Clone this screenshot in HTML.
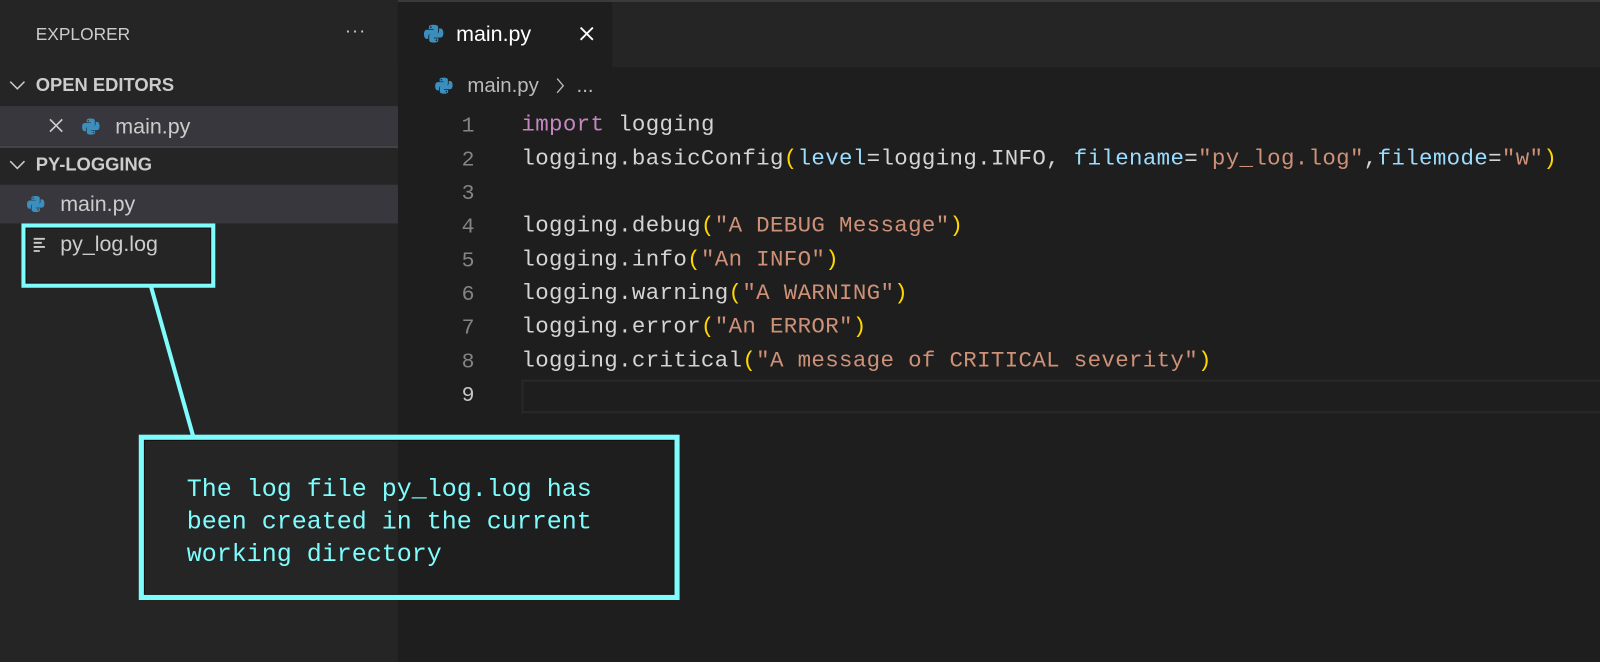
<!DOCTYPE html>
<html><head><meta charset="utf-8"><style>
*{margin:0;padding:0;box-sizing:border-box}
html,body{width:1600px;height:662px;overflow:hidden;background:#1e1e1e}
#wrap{width:1568px;height:649px;background:#1e1e1e;position:relative;overflow:hidden;font-family:"Liberation Sans",sans-serif;color:#ccc;transform:scale(1.0204);transform-origin:0 0}
.abs{position:absolute}
#side{left:0;top:0;width:390px;height:662px;background:#252526}
.ui{font-size:19px;color:#ccc;white-space:nowrap}
.mono{font-family:"Liberation Mono",monospace;font-size:22px;white-space:pre;letter-spacing:0.33px}
.k{color:#c586c0}.s{color:#ce9178}.p{color:#9cdcfe}.b{color:#ffd700}
.ln{color:#858585;width:40px;text-align:right;font-family:"Liberation Mono",monospace;font-size:21px}
</style></head><body><div id="wrap">
<div class="abs" style="left:0;top:0;width:1600px;height:2px;background:#3a3a3a"></div>
<div id="side" class="abs"></div>
<div class="abs" style="left:390px;top:2px;width:1210px;height:64px;background:#252526"></div>
<div class="abs" style="left:390px;top:2px;width:210px;height:64px;background:#1e1e1e"></div>

<svg width="0" height="0" style="position:absolute"><defs>
<g id="py"><path d="M7.8 1C4 1 4.3 2.6 4.3 2.6v1.7h3.6v.6H2.8S.4 4.6.4 8.4s2.1 3.7 2.1 3.7h1.3V10.3s-.1-2.1 2.1-2.1h3.6s2-.1 2-2V2.8S11.8 1 7.8 1zM5.8 2.2a.65.65 0 1 1 0 1.3.65.65 0 0 1 0-1.3z" fill="#3b8fbf"/>
<path d="M8.2 15c3.8 0 3.5-1.6 3.5-1.6v-1.7H8.1v-.6h5.1s2.4.3 2.4-3.5-2.1-3.7-2.1-3.7h-1.3v1.8s.1 2.1-2.1 2.1H6.5s-2 0-2 2v3.4S4.2 15 8.2 15zm2-1.2a.65.65 0 1 1 0-1.3.65.65 0 0 1 0 1.3z" fill="#3b8fbf"/></g>
</defs></svg>

<div class="abs ui" style="left:35px;top:24px;font-size:17px">EXPLORER</div>
<div class="abs" style="left:338px;top:20px;font-size:18px;color:#ccc;letter-spacing:1px">···</div>

<svg class="abs" style="left:8px;top:77px" width="18" height="14"><path d="M2 3l7 7 7-7" stroke="#ccc" stroke-width="1.5" fill="none"/></svg>
<div class="abs ui" style="left:35px;top:73px;font-weight:bold;font-size:18px">OPEN EDITORS</div>
<div class="abs" style="left:0;top:104px;width:390px;height:39px;background:#37373d"></div>
<div class="abs" style="left:0;top:143px;width:390px;height:2px;background:#444"></div>
<svg class="abs" style="left:47px;top:115px" width="16" height="16"><path d="M2 2l12 12M14 2L2 14" stroke="#ccc" stroke-width="1.6"/></svg>
<svg class="abs" style="left:80px;top:115px" width="18" height="18" viewBox="0 0 16 16"><use href="#py"/></svg>
<div class="abs ui" style="left:113px;top:113px;font-size:21px">main.py</div>

<svg class="abs" style="left:8px;top:155px" width="18" height="14"><path d="M2 3l7 7 7-7" stroke="#ccc" stroke-width="1.5" fill="none"/></svg>
<div class="abs ui" style="left:35px;top:151px;font-weight:bold;font-size:18px">PY-LOGGING</div>
<div class="abs" style="left:0;top:181px;width:390px;height:38px;background:#37373d"></div>
<svg class="abs" style="left:26px;top:191px" width="18" height="18" viewBox="0 0 16 16"><use href="#py"/></svg>
<div class="abs ui" style="left:59px;top:189px;font-size:21px">main.py</div>
<svg class="abs" style="left:32px;top:232px" width="14" height="16"><path d="M1 2h11M1 6h8M1 10h11M1 14h6" stroke="#ccc" stroke-width="1.8"/></svg>
<div class="abs ui" style="left:59px;top:228px;font-size:21px">py_log.log</div>

<svg class="abs" style="left:415px;top:23px" width="20" height="20" viewBox="0 0 16 16"><use href="#py"/></svg>
<div class="abs ui" style="left:447px;top:22px;font-size:21px;color:#fff">main.py</div>
<svg class="abs" style="left:567px;top:25px" width="16" height="16"><path d="M2 2l12 12M14 2L2 14" stroke="#fff" stroke-width="1.8"/></svg>

<svg class="abs" style="left:426px;top:75px" width="18" height="18" viewBox="0 0 16 16"><use href="#py"/></svg>
<div class="abs ui" style="left:458px;top:73px;font-size:20px;color:#bbb">main.py</div>
<svg class="abs" style="left:544px;top:75px" width="10" height="18"><path d="M2 2l6 7-6 7" stroke="#bbb" stroke-width="1.3" fill="none"/></svg>
<div class="abs ui" style="left:565px;top:73px;font-size:20px;color:#bbb">...</div>

<div class="abs" style="left:511px;top:372px;width:1089px;height:33px;border:2px solid #282828;border-right:none"></div>

<div class="abs ln" style="left:425px;top:108px;line-height:33px;width:40px">1<br>2<br>3<br>4<br>5<br>6<br>7<br>8<br><span style="color:#c6c6c6">9</span></div>
<div class="abs mono" style="left:511px;top:106px;line-height:33px;color:#d4d4d4"><span class="k">import</span> logging
logging.basicConfig<span class="b">(</span><span class="p">level</span>=logging.INFO, <span class="p">filename</span>=<span class="s">"py_log.log"</span>,<span class="p">filemode</span>=<span class="s">"w"</span><span class="b">)</span>

logging.debug<span class="b">(</span><span class="s">"A DEBUG Message"</span><span class="b">)</span>
logging.info<span class="b">(</span><span class="s">"An INFO"</span><span class="b">)</span>
logging.warning<span class="b">(</span><span class="s">"A WARNING"</span><span class="b">)</span>
logging.error<span class="b">(</span><span class="s">"An ERROR"</span><span class="b">)</span>
logging.critical<span class="b">(</span><span class="s">"A message of CRITICAL severity"</span><span class="b">)</span></div>

<div class="abs" style="left:21px;top:219px;width:190px;height:63px;border:4px solid #7ffcfc;box-shadow:inset 0 0 0 1px #111"></div>
<svg class="abs" style="left:0;top:0" width="700" height="662"><path d="M148 281L190 430" stroke="#7ffcfc" stroke-width="4"/></svg>
<div class="abs" style="left:136px;top:426px;width:530px;height:162px;border:5px solid #7ffcfc;box-shadow:inset 0 0 0 1px #111"></div>
<div class="abs" style="left:183px;top:465px;font-family:'Liberation Mono',monospace;font-size:24.5px;line-height:32px;color:#7ffcfc;white-space:pre">The log file py_log.log has
been created in the current
working directory</div>
</div></body></html>
